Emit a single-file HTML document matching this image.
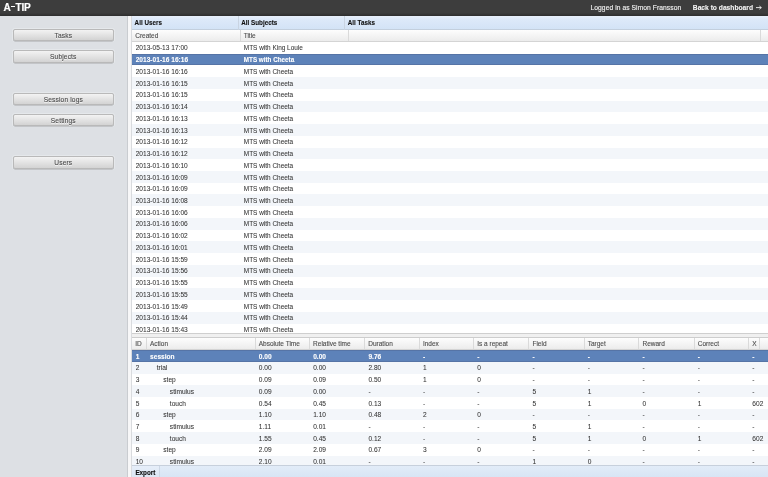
<!DOCTYPE html><html><head><meta charset="utf-8"><style>
*{margin:0;padding:0;box-sizing:border-box}
html,body{width:768px;height:477px;overflow:hidden;background:#fff;font-family:"Liberation Sans",sans-serif;}
#wrap{position:absolute;left:0;top:0;width:768px;height:477px;will-change:transform}
.a{position:absolute;white-space:nowrap}
#hdr{left:0;top:0;width:768px;height:15.8px;background:linear-gradient(#3d3d3d 80%,#2e2e2e);color:#fff}
#logo{left:3.6px;top:1.5px;font-size:10.1px;font-weight:bold;line-height:12px;letter-spacing:-0.15px;-webkit-text-stroke:0.15px #fff}
#login{left:590.5px;top:4.2px;font-size:6.7px;line-height:8px;letter-spacing:0.07px;color:#f4f4f4;-webkit-text-stroke:0.12px #f4f4f4}
#back{left:692.8px;top:4.2px;font-size:6.7px;line-height:8px;font-weight:bold;color:#f4f4f4;-webkit-text-stroke:0.1px #f4f4f4}
#side{left:0;top:15.8px;width:127.5px;height:462px;background:#dde0e4;border-right:1px solid #c9ccd0}
#strip{left:127.5px;top:15.8px;width:4.7px;height:462px;background:#f7f7f8;border-right:1px solid #d9dbde}
.btn{left:12.8px;width:101px;height:12.5px;border-radius:2px;background:linear-gradient(#f3f3f3,#d3d3d3);box-shadow:0 0.5px 0.6px rgba(0,0,0,.3),0 0 0 1px rgba(255,255,255,.25);border:0.5px solid #b9b9b9;text-align:center;font-size:6.6px;line-height:11.4px;color:#4a4a4a;letter-spacing:0.15px;-webkit-text-stroke:0.1px #4a4a4a;text-shadow:0 0.6px 0 rgba(255,255,255,.8)}
#top{left:132px;top:15.8px;width:636px;height:317px;overflow:hidden;background:#fff}
.band{position:absolute;left:0;top:0;width:636px;height:14.2px;background:linear-gradient(#e8f0fb,#dde9f9 25%,#d3e3f6);border-bottom:1px solid #c3cfdd}
.bcell{position:absolute;top:0;height:14.2px;border-right:1px solid #c9d4e2;font-size:6.3px;font-weight:bold;line-height:13.6px;padding-left:2.6px;color:#111;-webkit-text-stroke:0.1px #111}
.chead{position:absolute;left:0;width:636px;background:linear-gradient(#fdfdfd,#ececec);border-bottom:1px solid #d4d4d4}
.ccell{position:absolute;top:0;border-right:1px solid #dadada;font-size:6.5px;line-height:12.6px;padding-left:3.2px;color:#505050;-webkit-text-stroke:0.12px #505050}
.row{position:absolute;left:0;width:100%;height:11.73px;font-size:6.6px;line-height:11.73px;color:#333;-webkit-text-stroke:0.05px currentColor}
.tt{font-size:6.45px}
.row.sel .tt{font-size:6.3px}
.row.alt{background:#f3f6fa}
.row.sel{background:#5d82b9;color:#fff;font-weight:bold;font-size:6.6px;-webkit-text-stroke:0.1px #fff;box-shadow:inset 0 1px 0 #5674a6,inset 0 -1px 0 #5674a6}
.cell{position:absolute;top:0.5px;padding-left:3.3px}
#split{left:132px;top:332.6px;width:636px;height:5.6px;background:#f0f0f0;border-top:1.3px solid #cfcfcf;border-bottom:1px solid #cdcdcd}
#bot{left:132px;top:338.2px;width:636px;height:126.5px;overflow:hidden;background:#fff}
#tb{left:132px;top:464.6px;width:636px;height:13px;background:linear-gradient(#e2ecf8,#d7e4f4);border-top:1px solid #c7d0dc}
#exp{left:0;top:0;width:27.5px;height:12px;border-right:1px solid #cdd8e6;font-size:6.3px;font-weight:bold;line-height:13.2px;padding-left:3.4px;color:#111;-webkit-text-stroke:0.15px #111;background:linear-gradient(#e6eef9,#dbe6f4)}
</style></head><body><div id="wrap">
<div id="hdr" class="a"><div id="logo" class="a">A<span style="display:inline-block;width:4px;height:1.3px;background:#fff;vertical-align:3.1px;margin:0 0.4px 0 0.3px"></span>TIP</div><div id="login" class="a">Logged in as Simon Fransson</div><div id="back" class="a">Back to dashboard <svg width="6" height="5" viewBox="0 0 6 5" style="vertical-align:0px;margin-left:1px"><path d="M0 2.6H5.3M3.4 1L5.3 2.6L3.4 4.2" stroke="#f4f4f4" stroke-width="0.9" fill="none"/></svg></div></div>
<div id="side" class="a"></div><div id="strip" class="a"></div>
<div class="a btn" style="top:28.8px">Tasks</div>
<div class="a btn" style="top:50.1px">Subjects</div>
<div class="a btn" style="top:92.5px">Session logs</div>
<div class="a btn" style="top:113.9px">Settings</div>
<div class="a btn" style="top:156.4px">Users</div>
<div id="top" class="a">
<div class="band">
<div class="bcell" style="left:0.00px;width:106.60px">All Users</div>
<div class="bcell" style="left:106.60px;width:106.60px">All Subjects</div>
<div class="bcell" style="left:213.20px;width:454.80px">All Tasks</div>
</div>
<div class="chead" style="top:14.2px;height:12.00px">
<div class="ccell" style="left:0.00px;width:108.50px;height:11.00px">Created</div>
<div class="ccell" style="left:108.50px;width:108.40px;height:11.00px">Title</div>
<div class="ccell" style="left:216.90px;width:412.20px;height:11.00px"></div>
<div class="ccell" style="left:629.10px;width:38.90px;height:11.00px"></div>
</div>
<div class="row" style="top:26.20px"><span class="cell" style="left:0.4px">2013-05-13 17:00</span><span class="cell tt" style="left:108.50px">MTS with King Louie</span></div>
<div class="row sel" style="top:37.93px"><span class="cell" style="left:0.4px">2013-01-16 16:16</span><span class="cell tt" style="left:108.50px">MTS with Cheeta</span></div>
<div class="row" style="top:49.66px"><span class="cell" style="left:0.4px">2013-01-16 16:16</span><span class="cell tt" style="left:108.50px">MTS with Cheeta</span></div>
<div class="row alt" style="top:61.39px"><span class="cell" style="left:0.4px">2013-01-16 16:15</span><span class="cell tt" style="left:108.50px">MTS with Cheeta</span></div>
<div class="row" style="top:73.12px"><span class="cell" style="left:0.4px">2013-01-16 16:15</span><span class="cell tt" style="left:108.50px">MTS with Cheeta</span></div>
<div class="row alt" style="top:84.85px"><span class="cell" style="left:0.4px">2013-01-16 16:14</span><span class="cell tt" style="left:108.50px">MTS with Cheeta</span></div>
<div class="row" style="top:96.58px"><span class="cell" style="left:0.4px">2013-01-16 16:13</span><span class="cell tt" style="left:108.50px">MTS with Cheeta</span></div>
<div class="row alt" style="top:108.31px"><span class="cell" style="left:0.4px">2013-01-16 16:13</span><span class="cell tt" style="left:108.50px">MTS with Cheeta</span></div>
<div class="row" style="top:120.04px"><span class="cell" style="left:0.4px">2013-01-16 16:12</span><span class="cell tt" style="left:108.50px">MTS with Cheeta</span></div>
<div class="row alt" style="top:131.77px"><span class="cell" style="left:0.4px">2013-01-16 16:12</span><span class="cell tt" style="left:108.50px">MTS with Cheeta</span></div>
<div class="row" style="top:143.50px"><span class="cell" style="left:0.4px">2013-01-16 16:10</span><span class="cell tt" style="left:108.50px">MTS with Cheeta</span></div>
<div class="row alt" style="top:155.23px"><span class="cell" style="left:0.4px">2013-01-16 16:09</span><span class="cell tt" style="left:108.50px">MTS with Cheeta</span></div>
<div class="row" style="top:166.96px"><span class="cell" style="left:0.4px">2013-01-16 16:09</span><span class="cell tt" style="left:108.50px">MTS with Cheeta</span></div>
<div class="row alt" style="top:178.69px"><span class="cell" style="left:0.4px">2013-01-16 16:08</span><span class="cell tt" style="left:108.50px">MTS with Cheeta</span></div>
<div class="row" style="top:190.42px"><span class="cell" style="left:0.4px">2013-01-16 16:06</span><span class="cell tt" style="left:108.50px">MTS with Cheeta</span></div>
<div class="row alt" style="top:202.15px"><span class="cell" style="left:0.4px">2013-01-16 16:06</span><span class="cell tt" style="left:108.50px">MTS with Cheeta</span></div>
<div class="row" style="top:213.88px"><span class="cell" style="left:0.4px">2013-01-16 16:02</span><span class="cell tt" style="left:108.50px">MTS with Cheeta</span></div>
<div class="row alt" style="top:225.61px"><span class="cell" style="left:0.4px">2013-01-16 16:01</span><span class="cell tt" style="left:108.50px">MTS with Cheeta</span></div>
<div class="row" style="top:237.34px"><span class="cell" style="left:0.4px">2013-01-16 15:59</span><span class="cell tt" style="left:108.50px">MTS with Cheeta</span></div>
<div class="row alt" style="top:249.07px"><span class="cell" style="left:0.4px">2013-01-16 15:56</span><span class="cell tt" style="left:108.50px">MTS with Cheeta</span></div>
<div class="row" style="top:260.80px"><span class="cell" style="left:0.4px">2013-01-16 15:55</span><span class="cell tt" style="left:108.50px">MTS with Cheeta</span></div>
<div class="row alt" style="top:272.53px"><span class="cell" style="left:0.4px">2013-01-16 15:55</span><span class="cell tt" style="left:108.50px">MTS with Cheeta</span></div>
<div class="row" style="top:284.26px"><span class="cell" style="left:0.4px">2013-01-16 15:49</span><span class="cell tt" style="left:108.50px">MTS with Cheeta</span></div>
<div class="row alt" style="top:295.99px"><span class="cell" style="left:0.4px">2013-01-16 15:44</span><span class="cell tt" style="left:108.50px">MTS with Cheeta</span></div>
<div class="row" style="top:307.72px"><span class="cell" style="left:0.4px">2013-01-16 15:43</span><span class="cell tt" style="left:108.50px">MTS with Cheeta</span></div>
<div class="row alt" style="top:319.45px"><span class="cell" style="left:0.4px">2013-01-16 15:40</span><span class="cell tt" style="left:108.50px">MTS with Cheeta</span></div>
</div>
<div id="split" class="a"></div>
<div id="bot" class="a">
<div class="chead" style="top:0;height:11.90px">
<div class="ccell" style="left:0.00px;width:14.75px;height:10.90px">ID</div>
<div class="ccell" style="left:14.75px;width:108.75px;height:10.90px">Action</div>
<div class="ccell" style="left:123.50px;width:54.40px;height:10.90px">Absolute Time</div>
<div class="ccell" style="left:177.90px;width:55.20px;height:10.90px">Relative time</div>
<div class="ccell" style="left:233.10px;width:54.60px;height:10.90px">Duration</div>
<div class="ccell" style="left:287.70px;width:54.30px;height:10.90px">Index</div>
<div class="ccell" style="left:342.00px;width:55.25px;height:10.90px">Is a repeat</div>
<div class="ccell" style="left:397.25px;width:55.25px;height:10.90px">Field</div>
<div class="ccell" style="left:452.50px;width:54.75px;height:10.90px">Target</div>
<div class="ccell" style="left:507.25px;width:55.25px;height:10.90px">Reward</div>
<div class="ccell" style="left:562.50px;width:54.50px;height:10.90px">Correct</div>
<div class="ccell" style="left:617.00px;width:11.30px;height:10.90px">X</div>
<div class="ccell" style="left:628.30px;width:39.70px;height:10.90px"></div>
</div>
<div class="row sel" style="top:11.90px"><span class="cell" style="left:0.40px">1</span><span class="cell" style="left:14.75px;padding-left:3.30px">session</span><span class="cell" style="left:123.50px">0.00</span><span class="cell" style="left:177.90px">0.00</span><span class="cell" style="left:233.10px">9.76</span><span class="cell" style="left:287.70px">-</span><span class="cell" style="left:342.00px">-</span><span class="cell" style="left:397.25px">-</span><span class="cell" style="left:452.50px">-</span><span class="cell" style="left:507.25px">-</span><span class="cell" style="left:562.50px">-</span><span class="cell" style="left:617.00px">-</span></div>
<div class="row alt" style="top:23.63px"><span class="cell" style="left:0.40px">2</span><span class="cell" style="left:14.75px;padding-left:9.90px">trial</span><span class="cell" style="left:123.50px">0.00</span><span class="cell" style="left:177.90px">0.00</span><span class="cell" style="left:233.10px">2.80</span><span class="cell" style="left:287.70px">1</span><span class="cell" style="left:342.00px">0</span><span class="cell" style="left:397.25px">-</span><span class="cell" style="left:452.50px">-</span><span class="cell" style="left:507.25px">-</span><span class="cell" style="left:562.50px">-</span><span class="cell" style="left:617.00px">-</span></div>
<div class="row" style="top:35.36px"><span class="cell" style="left:0.40px">3</span><span class="cell" style="left:14.75px;padding-left:16.50px">step</span><span class="cell" style="left:123.50px">0.09</span><span class="cell" style="left:177.90px">0.09</span><span class="cell" style="left:233.10px">0.50</span><span class="cell" style="left:287.70px">1</span><span class="cell" style="left:342.00px">0</span><span class="cell" style="left:397.25px">-</span><span class="cell" style="left:452.50px">-</span><span class="cell" style="left:507.25px">-</span><span class="cell" style="left:562.50px">-</span><span class="cell" style="left:617.00px">-</span></div>
<div class="row alt" style="top:47.09px"><span class="cell" style="left:0.40px">4</span><span class="cell" style="left:14.75px;padding-left:23.10px">stimulus</span><span class="cell" style="left:123.50px">0.09</span><span class="cell" style="left:177.90px">0.00</span><span class="cell" style="left:233.10px">-</span><span class="cell" style="left:287.70px">-</span><span class="cell" style="left:342.00px">-</span><span class="cell" style="left:397.25px">5</span><span class="cell" style="left:452.50px">1</span><span class="cell" style="left:507.25px">-</span><span class="cell" style="left:562.50px">-</span><span class="cell" style="left:617.00px">-</span></div>
<div class="row" style="top:58.82px"><span class="cell" style="left:0.40px">5</span><span class="cell" style="left:14.75px;padding-left:23.10px">touch</span><span class="cell" style="left:123.50px">0.54</span><span class="cell" style="left:177.90px">0.45</span><span class="cell" style="left:233.10px">0.13</span><span class="cell" style="left:287.70px">-</span><span class="cell" style="left:342.00px">-</span><span class="cell" style="left:397.25px">5</span><span class="cell" style="left:452.50px">1</span><span class="cell" style="left:507.25px">0</span><span class="cell" style="left:562.50px">1</span><span class="cell" style="left:617.00px">602</span></div>
<div class="row alt" style="top:70.55px"><span class="cell" style="left:0.40px">6</span><span class="cell" style="left:14.75px;padding-left:16.50px">step</span><span class="cell" style="left:123.50px">1.10</span><span class="cell" style="left:177.90px">1.10</span><span class="cell" style="left:233.10px">0.48</span><span class="cell" style="left:287.70px">2</span><span class="cell" style="left:342.00px">0</span><span class="cell" style="left:397.25px">-</span><span class="cell" style="left:452.50px">-</span><span class="cell" style="left:507.25px">-</span><span class="cell" style="left:562.50px">-</span><span class="cell" style="left:617.00px">-</span></div>
<div class="row" style="top:82.28px"><span class="cell" style="left:0.40px">7</span><span class="cell" style="left:14.75px;padding-left:23.10px">stimulus</span><span class="cell" style="left:123.50px">1.11</span><span class="cell" style="left:177.90px">0.01</span><span class="cell" style="left:233.10px">-</span><span class="cell" style="left:287.70px">-</span><span class="cell" style="left:342.00px">-</span><span class="cell" style="left:397.25px">5</span><span class="cell" style="left:452.50px">1</span><span class="cell" style="left:507.25px">-</span><span class="cell" style="left:562.50px">-</span><span class="cell" style="left:617.00px">-</span></div>
<div class="row alt" style="top:94.01px"><span class="cell" style="left:0.40px">8</span><span class="cell" style="left:14.75px;padding-left:23.10px">touch</span><span class="cell" style="left:123.50px">1.55</span><span class="cell" style="left:177.90px">0.45</span><span class="cell" style="left:233.10px">0.12</span><span class="cell" style="left:287.70px">-</span><span class="cell" style="left:342.00px">-</span><span class="cell" style="left:397.25px">5</span><span class="cell" style="left:452.50px">1</span><span class="cell" style="left:507.25px">0</span><span class="cell" style="left:562.50px">1</span><span class="cell" style="left:617.00px">602</span></div>
<div class="row" style="top:105.74px"><span class="cell" style="left:0.40px">9</span><span class="cell" style="left:14.75px;padding-left:16.50px">step</span><span class="cell" style="left:123.50px">2.09</span><span class="cell" style="left:177.90px">2.09</span><span class="cell" style="left:233.10px">0.67</span><span class="cell" style="left:287.70px">3</span><span class="cell" style="left:342.00px">0</span><span class="cell" style="left:397.25px">-</span><span class="cell" style="left:452.50px">-</span><span class="cell" style="left:507.25px">-</span><span class="cell" style="left:562.50px">-</span><span class="cell" style="left:617.00px">-</span></div>
<div class="row alt" style="top:117.47px"><span class="cell" style="left:0.40px">10</span><span class="cell" style="left:14.75px;padding-left:23.10px">stimulus</span><span class="cell" style="left:123.50px">2.10</span><span class="cell" style="left:177.90px">0.01</span><span class="cell" style="left:233.10px">-</span><span class="cell" style="left:287.70px">-</span><span class="cell" style="left:342.00px">-</span><span class="cell" style="left:397.25px">1</span><span class="cell" style="left:452.50px">0</span><span class="cell" style="left:507.25px">-</span><span class="cell" style="left:562.50px">-</span><span class="cell" style="left:617.00px">-</span></div>
<div class="row" style="top:129.20px"><span class="cell" style="left:0.40px">11</span><span class="cell" style="left:14.75px;padding-left:23.10px">touch</span><span class="cell" style="left:123.50px">2.55</span><span class="cell" style="left:177.90px">0.45</span><span class="cell" style="left:233.10px">0.13</span><span class="cell" style="left:287.70px">-</span><span class="cell" style="left:342.00px">-</span><span class="cell" style="left:397.25px">1</span><span class="cell" style="left:452.50px">0</span><span class="cell" style="left:507.25px">-</span><span class="cell" style="left:562.50px">-</span><span class="cell" style="left:617.00px">-</span></div>
</div>
<div id="tb" class="a"><div id="exp" class="a">Export</div></div>
</div></body></html>
